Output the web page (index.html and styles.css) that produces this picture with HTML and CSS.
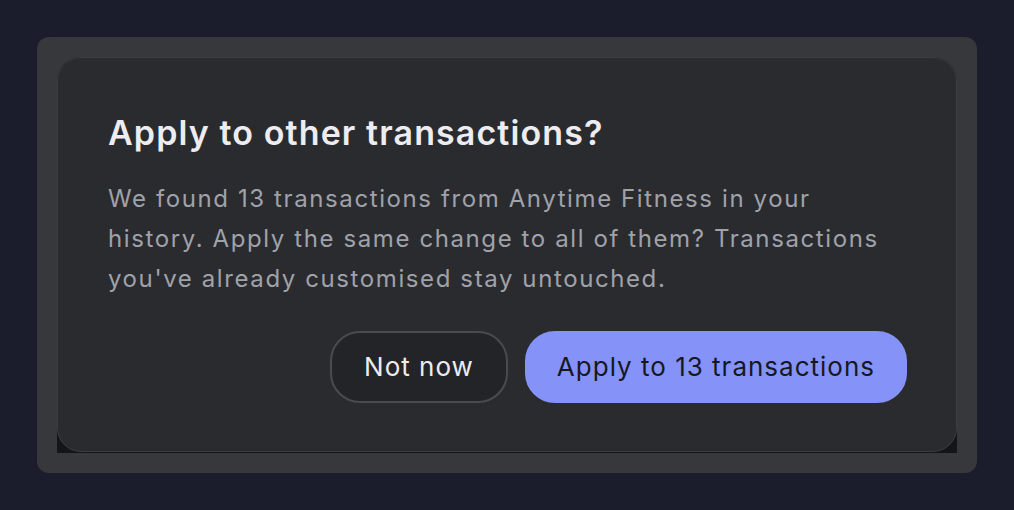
FILE: index.html
```html
<!DOCTYPE html>
<html lang="en">
<head>
<meta charset="utf-8">
<title>Apply to other transactions?</title>
<link rel="stylesheet" href="styles.css">
</head>
<body>
<div class="stage">
  <div class="panel">
    <div class="backdrop">
      <div class="dialog" role="dialog" aria-labelledby="dlg-title">
        <h2 class="dialog-title" id="dlg-title">Apply to other transactions?</h2>
        <p class="dialog-text">We found 13 transactions from Anytime Fitness in your history. Apply the same change to all of them? Transactions you've already customised stay untouched.</p>
        <div class="dialog-actions">
          <button class="btn btn-secondary" type="button">Not now</button>
          <button class="btn btn-primary" type="button">Apply to 13 transactions</button>
        </div>
      </div>
    </div>
  </div>
</div>
</body>
</html>
```

FILE: styles.css
```css
* { box-sizing: border-box; }

html, body {
  margin: 0;
  padding: 0;
  background: #1b1c2c;
}

body {
  font-family: Inter, "DejaVu Sans", sans-serif;
  width: 1014px;
  height: 510px;
}

.stage {
  padding: 37px;
}

.panel {
  width: 940px;
  height: 436px;
  background: #37383c;
  border-radius: 12px;
  padding: 20px;
}

.backdrop {
  width: 900px;
  height: 396px;
  background: #141519;
  border-radius: 24px 24px 0 0;
}

.dialog {
  width: 900px;
  height: 395px;
  background: #2a2b2f;
  border: 1px solid #3c3d42;
  border-radius: 24px;
  padding: 54px 49px 48px 50px;
  display: flex;
  flex-direction: column;
}

.dialog-title {
  margin: 0;
  font-size: 34px;
  line-height: 42px;
  font-weight: 600;
  color: #ececf1;
  letter-spacing: 1.1px;
}

.dialog-text {
  margin: 25px 0 0;
  max-width: 790px;
  font-size: 24px;
  line-height: 40px;
  font-weight: 400;
  color: #a0a2aa;
  letter-spacing: 1.6px;
}

.dialog-actions {
  margin-top: 32px;
  display: flex;
  justify-content: flex-end;
  gap: 17px;
}

.btn {
  font-family: inherit;
  font-size: 26px;
  line-height: 36px;
  height: 72px;
  padding: 0 32px;
  border-radius: 30px;
  cursor: pointer;
  letter-spacing: 1px;
}

.btn-secondary {
  background: #232428;
  border: 2px solid #4a4b50;
  color: #ececf0;
  padding: 0 32px;
}

.btn-primary {
  background: #8593f8;
  border: 2px solid #8593f8;
  color: #17181f;
  padding: 0 30px;
}
```
